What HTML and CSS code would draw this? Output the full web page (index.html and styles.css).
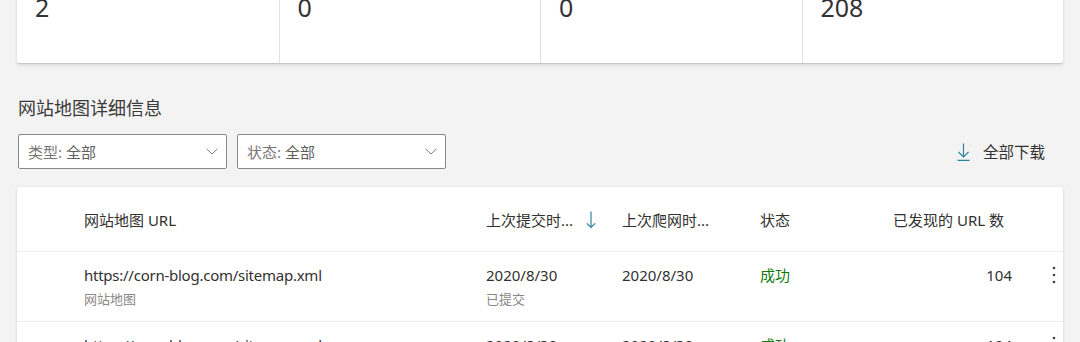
FILE: index.html
```html
<!DOCTYPE html>
<html lang="zh-CN">
<head>
  <meta charset="UTF-8">
  <meta name="viewport" content="width=device-width, initial-scale=1.0">
  <title>网站地图</title>
  <link rel="stylesheet" href="styles.css">
</head>
<body>
  <main class="page">
    <section class="summary">
      <div class="stat"><div class="stat-value">2</div></div>
      <div class="stat"><div class="stat-value">0</div></div>
      <div class="stat"><div class="stat-value">0</div></div>
      <div class="stat"><div class="stat-value">208</div></div>
    </section>

    <h2 class="section-title">网站地图详细信息</h2>

    <div class="toolbar">
      <div class="dropdown">
        <span class="dropdown-text"><span class="dropdown-label">类型:</span> 全部</span>
        <svg class="chevron" width="12" height="7" viewBox="0 0 12 7"><path d="M0.5 0.8 L6 6 L11.5 0.8" fill="none" stroke="#7a7a7a" stroke-width="1"/></svg>
      </div>
      <div class="dropdown">
        <span class="dropdown-text"><span class="dropdown-label">状态:</span> 全部</span>
        <svg class="chevron" width="12" height="7" viewBox="0 0 12 7"><path d="M0.5 0.8 L6 6 L11.5 0.8" fill="none" stroke="#7a7a7a" stroke-width="1"/></svg>
      </div>
      <button class="download" type="button">
        <svg width="13" height="18" viewBox="0 0 13 18"><path d="M6.5 0.5 V14 M1.5 9 L6.5 14 L11.5 9 M0.5 17.3 H12.5" fill="none" stroke="#2d84a1" stroke-width="1.2"/></svg>
        <span>全部下载</span>
      </button>
    </div>

    <section class="table-card">
      <div class="table-row table-head">
        <div></div>
        <div>网站地图 URL</div>
        <div class="sorted">
          <span>上次提交时...</span>
          <svg width="10" height="18" viewBox="0 0 10 18"><path d="M5 0.5 V16.5 M0.8 12.3 L5 16.5 L9.2 12.3" fill="none" stroke="#2d84a1" stroke-width="1.2"/></svg>
        </div>
        <div>上次爬网时...</div>
        <div>状态</div>
        <div class="num head-num">已发现的 URL 数</div>
        <div></div>
      </div>
      <div class="table-row">
        <div></div>
        <div>
          <div class="cell-main cell-url">https://corn-blog.com/sitemap.xml</div>
          <div class="cell-sub">网站地图</div>
        </div>
        <div>
          <div class="cell-main">2020/8/30</div>
          <div class="cell-sub">已提交</div>
        </div>
        <div><div class="cell-main">2020/8/30</div></div>
        <div><div class="cell-main status-ok">成功</div></div>
        <div class="num"><div class="cell-main">104</div></div>
        <div class="more">
          <svg width="4" height="18" viewBox="0 0 4 18"><circle cx="2" cy="2" r="1.3" fill="#444"/><circle cx="2" cy="9" r="1.3" fill="#444"/><circle cx="2" cy="16" r="1.3" fill="#444"/></svg>
        </div>
      </div>
      <div class="table-row">
        <div></div>
        <div>
          <div class="cell-main cell-url">https://corn-blog.com/sitemap.xml</div>
          <div class="cell-sub">网站地图</div>
        </div>
        <div>
          <div class="cell-main">2020/8/30</div>
          <div class="cell-sub">已提交</div>
        </div>
        <div><div class="cell-main">2020/8/30</div></div>
        <div><div class="cell-main status-ok">成功</div></div>
        <div class="num"><div class="cell-main">104</div></div>
        <div class="more">
          <svg width="4" height="18" viewBox="0 0 4 18"><circle cx="2" cy="2" r="1.3" fill="#444"/><circle cx="2" cy="9" r="1.3" fill="#444"/><circle cx="2" cy="16" r="1.3" fill="#444"/></svg>
        </div>
      </div>
    </section>
  </main>
</body>
</html>
```

FILE: styles.css
```css
/* Base */
body {
  margin: 0;
  padding: 0;
  background: #f3f3f3;
  color: #323130;
  font-family: 'Noto Sans', 'Noto Sans CJK SC', sans-serif;
  font-size: 15px;
  overflow: hidden;
}
.page {
  padding: 0 17px;
}

/* Summary card */
.summary {
  display: grid;
  grid-template-columns: repeat(4, 1fr);
  margin-top: -9px;
  background: #fff;
  border-radius: 0 0 2px 2px;
  box-shadow: 0 1.6px 3.6px rgba(0, 0, 0, 0.12), 0 0.3px 0.9px rgba(0, 0, 0, 0.1);
}
.stat {
  padding: 0 18px 40px;
}
.stat + .stat {
  border-left: 1px solid #e1e1e1;
}
.stat-value {
  font-size: 25px;
  line-height: 32px;
  color: #333;
}

/* Section header */
.section-title {
  margin: 33px 0 14px 1px;
  font-size: 18px;
  line-height: 24px;
  font-weight: normal;
  color: #3b3a39;
}

/* Toolbar */
.toolbar {
  display: flex;
  align-items: center;
  gap: 10px;
  padding-left: 1px;
}
.dropdown {
  box-sizing: border-box;
  width: 209px;
  height: 35px;
  display: flex;
  align-items: center;
  justify-content: space-between;
  padding: 0 8px 0 9px;
  background: #fff;
  border: 1px solid #8a8886;
  border-radius: 2px;
  color: #605e5c;
}
.dropdown-label {
  color: #797775;
}
.chevron {
  display: block;
}
.download {
  margin-left: auto;
  display: flex;
  align-items: center;
  gap: 13px;
  padding: 0 18px 0 0;
  background: none;
  border: none;
  font: inherit;
  font-size: 15.5px;
  color: #323130;
  cursor: pointer;
}
.download svg {
  display: block;
}

/* Table card */
.table-card {
  margin-top: 18px;
  background: #fff;
  border-radius: 2px;
  box-shadow: 0 1.6px 3.6px rgba(0, 0, 0, 0.12), 0 0.3px 0.9px rgba(0, 0, 0, 0.1);
}
.table-row {
  display: grid;
  grid-template-columns: 67px 402px 136px 138px 118px 144px 1fr;
  border-top: 1px solid #edebe9;
  padding: 12px 0;
}
.table-head {
  border-top: none;
  height: 65px;
  box-sizing: border-box;
  padding: 0;
  align-items: center;
  border-bottom: 1px solid #edebe9;
}
.table-head + .table-row {
  border-top: none;
}
.sorted {
  display: flex;
  align-items: center;
  gap: 13px;
}
.sorted svg {
  display: block;
  margin-top: 1px;
}
.num {
  text-align: right;
  padding-right: 10px;
}
.head-num {
  padding-right: 18px;
}
.cell-main {
  line-height: 22px;
  color: #323130;
}
.cell-url {
  letter-spacing: -0.25px;
}
.cell-sub {
  margin-top: 3px;
  line-height: 20px;
  font-size: 13px;
  color: #8a8886;
}
.status-ok {
  color: #107c10;
}
.more {
  display: flex;
  justify-content: flex-end;
  padding: 2px 7px 0 0;
}
.more svg {
  display: block;
}
```
